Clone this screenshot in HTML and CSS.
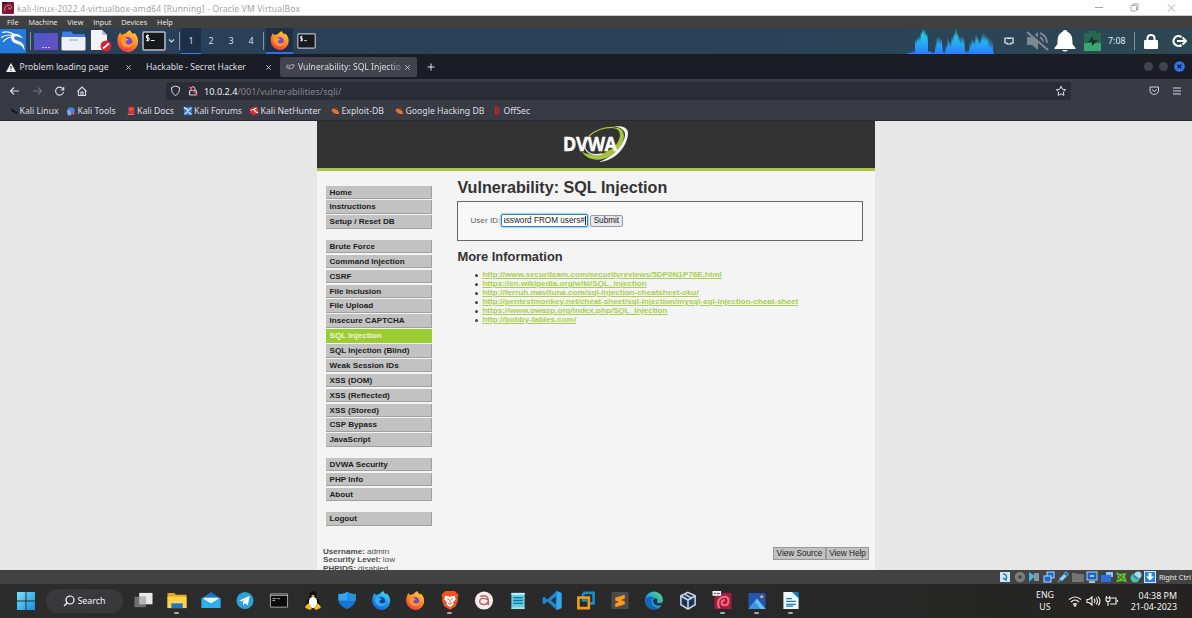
FILE: index.html
```
<!DOCTYPE html>
<html lang="en">
<head>
<meta charset="utf-8">
<title>kali-linux-2022.4-virtualbox-amd64 [Running] - Oracle VM VirtualBox</title>
<link rel="stylesheet" href="styles.css">
</head>
<body>
<svg width="0" height="0" class="defs">
  <defs>
    <linearGradient id="gGraph" x1="0" y1="0" x2="0" y2="1"><stop offset="0" stop-color="#25e6d2"/><stop offset=".5" stop-color="#25b4f0"/><stop offset="1" stop-color="#2a7cff"/></linearGradient>
    <linearGradient id="gFox" x1=".8" y1="0" x2=".3" y2="1"><stop offset="0" stop-color="#ffd43a"/><stop offset=".5" stop-color="#ff8a1e"/><stop offset="1" stop-color="#f2334c"/></linearGradient>
    <linearGradient id="gFoxB" x1=".8" y1="0" x2=".3" y2="1"><stop offset="0" stop-color="#4de0f5"/><stop offset=".5" stop-color="#1f9cf0"/><stop offset="1" stop-color="#1b5fd8"/></linearGradient>
    <linearGradient id="gDesk" x1="0" y1="0" x2="1" y2="1"><stop offset="0" stop-color="#4a58c8"/><stop offset="1" stop-color="#6a4fc0"/></linearGradient>
    <linearGradient id="gWin" x1="0" y1="0" x2="1" y2="1"><stop offset="0" stop-color="#7be0fa"/><stop offset="1" stop-color="#1290dd"/></linearGradient>
    <linearGradient id="gEdge" x1="0" y1="1" x2="1" y2="0"><stop offset="0" stop-color="#0c6ac4"/><stop offset=".5" stop-color="#22a8dc"/><stop offset="1" stop-color="#64dc60"/></linearGradient>
    <symbol id="fox" viewBox="0 0 24 24"><path fill="url(#gFox)" d="M1 13C.500 9 2 5.500 4 2.500l1.500 3c1-1 2.500-1.500 4-1.500C11 2.500 13 1 15 0c0 2 2 3 3.500 4.500L19.500 3C22.500 6 24 10 23.500 13.500 23 19.500 17.500 24 12.300 24S1.500 19.500 1 13z"/><circle cx="12" cy="13" r="5.300" fill="#7a45d8"/><path fill="#ff9a28" d="M5.500 8.500c2-1 4-.500 5.500.800l2 .700c-.500 1.500-2.500 1.300-3 2.500-.400 2 1.500 3.500 3.500 3.200 2-.300 3-1.700 5-1.200-1.500 4-6 5.500-9.500 4C5 17 4 12 5.500 8.500z"/></symbol>
    <symbol id="foxb" viewBox="0 0 24 24"><path fill="url(#gFoxB)" d="M1 13C.500 9 2 5.500 4 2.500l1.500 3c1-1 2.500-1.500 4-1.500C11 2.500 13 1 15 0c0 2 2 3 3.500 4.500L19.500 3C22.500 6 24 10 23.500 13.500 23 19.500 17.500 24 12.300 24S1.500 19.500 1 13z"/><circle cx="12" cy="13" r="5.300" fill="#123f96"/><path fill="#31aef5" d="M5.500 8.500c2-1 4-.500 5.500.800l2 .700c-.500 1.500-2.500 1.300-3 2.500-.400 2 1.500 3.500 3.500 3.200 2-.300 3-1.700 5-1.200-1.500 4-6 5.500-9.500 4C5 17 4 12 5.500 8.500z"/></symbol>
    <symbol id="term" viewBox="0 0 24 20"><rect x="1" y="1" width="22" height="18" rx="1" fill="#17191c" stroke="#b9bfc6" stroke-width="1.500"/><path d="M7 4.500H4.500V7H7v2.500H4.200M5.700 3.500v7M9 9.500h3.500" stroke="#fff" fill="none"/></symbol>
    <symbol id="x" viewBox="0 0 8 8"><path d="M1.500 1.500l5 5m0-5l-5 5" stroke="currentColor" fill="none"/></symbol>
    <symbol id="bug" viewBox="0 0 12 12"><path d="M2 4l3-1 5 3 1 3.500-4 0-4-2z" fill="#ef7228"/><path d="M2 6l3 3M6 4l3-1" stroke="#a84e20"/></symbol>
  </defs>
</svg>

<header class="titlebar">
  <svg class="vm-icon" viewBox="0 0 12 12"><rect width="12" height="12" rx="1" fill="#7d1732"/><path d="M3 9c-1-3 1-6 4-6s3 4 1 4-2-2-1-2" fill="none" stroke="#e4869a"/><path d="M0 0h5v2H0z" fill="#4b1020"/></svg>
  <span class="title-text">kali-linux-2022.4-virtualbox-amd64 [Running] - Oracle VM VirtualBox</span>
  <svg class="win-controls" viewBox="0 0 90 16" fill="none" stroke="#9c9c9c" stroke-width=".9"><path d="M5 7.500h8M78 4.500l7 7m0-7l-7 7"/><rect x="41" y="5.500" width="5.500" height="5.500" rx="1"/><path d="M43 5.500V4h5v5.500h-1.500"/></svg>
</header>

<nav class="vmmenu"><span>File</span><span>Machine</span><span>View</span><span>Input</span><span>Devices</span><span>Help</span></nav>

<div class="panel">
  <svg class="kali" viewBox="0 0 26 24"><rect width="26" height="24" fill="#2479dc"/><path d="M2 3.500c5-1.500 9-.500 12 2M1 8.500c4-2.500 8-3 12-2M3 13c2-3 5-5 10-5" stroke="#fff" stroke-width="1.200" fill="none"/><path d="M12 5c4-1 8 0 11 4l-4-1c-2-1-4-.800-5 0 0 2.500 2 3.500 5 4.200 3.500 1 5.500 4 5.500 9-2-4-4-5.500-7-6.200-4-1-6.500-3-6.500-6.500z" fill="#fff"/></svg>
  <i class="sep s1"></i>
  <svg class="desk" viewBox="0 0 24 17"><rect width="24" height="17" rx="1" fill="url(#gDesk)"/><path d="M8 14.500h2m1 0h2m1 0h2" stroke="#b8c8ff"/></svg>
  <svg class="folder" viewBox="0 0 25 20"><path d="M1 2q0-1.500 1.500-1.500h8L12 3h11q1 0 1 1v5H1z" fill="#3f7ae8"/><path d="M.5 6h24v12q0 1.500-1.500 1.500H2Q.5 19.500.5 18z" fill="#eef1f7"/><path d="M8 9h9" stroke="#b7bcc8" stroke-width="1.500"/></svg>
  <svg class="doc" viewBox="0 0 22 22"><path d="M1 0h11l5 5v15H1z" fill="#f3f3f5"/><path d="M12 0v5h5z" fill="#b9bec6"/><circle cx="16" cy="16" r="5.500" fill="#d42531"/><path d="M13 18.500l6-5" stroke="#fff" stroke-width="1.700"/></svg>
  <svg class="fox1"><use href="#fox"/></svg>
  <svg class="term1"><use href="#term"/></svg>
  <svg class="chev" viewBox="0 0 8 6"><path d="M2 1.500l2.500 2.500L7 1.500" fill="none" stroke="#d4d9df" stroke-width="1.200"/></svg>
  <i class="sep s2"></i>
  <span class="ws active">1</span><span class="ws">2</span><span class="ws">3</span><span class="ws">4</span>
  <i class="sep s3"></i>
  <span class="task-active"><svg><use href="#fox"/></svg></span>
  <svg class="term2"><use href="#term"/></svg>
  <svg class="graph" viewBox="0 0 87 26"><path fill="url(#gGraph)" d="M0 26V25.300H3L4 24 5 25.300 6 23 7 25 8 24V15L9 11 10 18V10L11 13 12 8 13 14 14 4 15 8V2L16 6 17 0V8L18 2 19 9 20 5 21 14V24L23 23 25 25 28 24V16L29 22 30 9 31 16 32 8 33 17 34 11 35 15 36 24 38 25 39 17 40 21 41 10 42 18 43 13 44 19 45 8 46 14 47 5 48 9 49 0 50 10 51 4 52 14 53 8 54 17 55 8 56 15 57 10 58 23 60 25 61 22 62 25 63 14 64 20 65 10 66 17 67 12 68 17 69 6 70 13 71 9 72 17 73 11 74 16 75 6 76 13 77 5 78 14 79 7 80 14 81 9 82 20 83 10 84 22 85 12 86 23 87 26z"/></svg>
  <svg class="net" viewBox="0 0 10 8"><path d="M1 1h8v5H7v1H3V6H1zM3 1.500h4" fill="none" stroke="#eee" stroke-width="1.200"/></svg>
  <svg class="mute" viewBox="0 0 24 20"><path d="M1 6h5l6-5v18l-6-5H1z" fill="#7d8992"/><path d="M14 2q7 3 7 10M14 6q3 2 3 6" stroke="#7d8992" stroke-width="2" fill="none"/><path d="M3 0l21 18" stroke="#2b4355" stroke-width="2"/><path d="M1 1l21 18" stroke="#7d8992" stroke-width="2.200"/></svg>
  <svg class="bell" viewBox="0 0 22 22"><path d="M11 0q2 0 2.500 2C18 4 18.500 8 18.500 14l3 4v1H.5v-1l3-4C3.500 8 4 4 8.500 2Q9 0 11 0z" fill="#fff"/><path d="M8 20h6q-3 3-6 0z" fill="#fff"/></svg>
  <svg class="batt" viewBox="0 0 17 20"><path d="M5 0h7v2h5v18H0V2h5z" fill="#286650"/><path d="M0 12h17v8H0z" fill="#3aa871"/><path d="M9 5l-5 6h4v4l6-6H9z" fill="#17372e"/></svg>
  <span class="clock">7:08</span>
  <i class="sep s4"></i>
  <svg class="lock" viewBox="0 0 14 15"><path d="M3.500 7V4a3.500 3 0 0 1 7 0v3" fill="none" stroke="#fff" stroke-width="2"/><rect x="0" y="6" width="14" height="9" rx="1" fill="#fff"/></svg>
  <svg class="logout" viewBox="0 0 16 14"><path d="M10.500 3A5 5 0 1 0 10.500 11" fill="none" stroke="#fff" stroke-width="2.200"/><path d="M6 7h8M11.500 3.500L15 7l-3.500 3.500" fill="none" stroke="#fff" stroke-width="2"/></svg>
</div>

<div class="tabs">
  <div class="tab t1"><svg class="warn" viewBox="0 0 10 9"><path d="M5 0l5 9H0z" fill="#f3f3f3"/><path d="M5 3v3m0 1v1" stroke="#222"/></svg><span>Problem loading page</span><svg class="close"><use href="#x"/></svg></div>
  <div class="tab t2"><span>Hackable - Secret Hacker</span><svg class="close"><use href="#x"/></svg></div>
  <div class="tab t3"><svg class="fav" viewBox="0 0 10 8"><path d="M3 2H1v3h3M3.500 4.500q0-3 3-3h2.500q0 4-3.500 4.500H3" fill="none" stroke="#a5a9ae" stroke-width="1.100"/></svg><span>Vulnerability: SQL Injectio</span><svg class="close"><use href="#x"/></svg></div>
  <svg class="plus" viewBox="0 0 8 8"><path d="M4 .5v7M.5 4h7" stroke="#e3e3e6"/></svg>
  <div class="dots"><i></i><i></i><svg viewBox="0 0 12 12"><circle cx="6" cy="6" r="5.800" fill="#2f74f0"/><path d="M4 4l4 4m0-4l-4 4" stroke="#10152a" stroke-width="1.500"/></svg></div>
</div>

<div class="navbar">
  <svg class="navicons" viewBox="0 0 100 22" fill="none" stroke="#dedee2" stroke-width="1.100"><path d="M19 11h-8.500m3.500-3.500L10.500 11l3.500 3.500"/><path d="M33 11h8.500M38 7.500l3.500 3.500L38 14.500" stroke="#70727b"/><path d="M63 9a4 4 0 1 0 .5 3M63.700 7v3h-3"/><path d="M77.500 11.500L82 7l4.500 4.500M78.500 11v4.500h7V11M81 15v-3h2v3"/></svg>
  <div class="url">
    <svg class="urlicons" viewBox="0 0 34 18"><path d="M5.500 5.500L9.500 4l4 1.500c0 4-1 6.500-4 8-3-1.500-4-4-4-8z" fill="none" stroke="#dedee2"/><rect x="23.500" y="8.500" width="7" height="4.500" rx="1" fill="none" stroke="#d0d0d5" stroke-width="1.200"/><path d="M25 8V6q2-3 4 0v2" fill="none" stroke="#d0d0d5"/><path d="M23 4.500l8.500 9" stroke="#e4445d" stroke-width="1.200"/></svg>
    <span class="addr"><b>10.0.2.4</b>/001/vulnerabilities/sqli/</span>
    <svg class="star" viewBox="0 0 12 12"><path d="M6 1.200l1.400 3.100 3.300.4-2.400 2.300.6 3.400L6 8.800l-2.900 1.600.6-3.400-2.400-2.300 3.300-.4z" fill="none" stroke="#dedee2"/></svg>
  </div>
  <svg class="navright" viewBox="0 0 40 18"><path d="M5 5h8.500v3q0 4-4.250 4.500Q5 12 5 8zM7 7.500l2.300 2 2.300-2" fill="none" stroke="#d5d5da"/><path d="M28 6h8M28 9h8M28 12h8" stroke="#d5d5da"/></svg>
</div>

<div class="bookmarks">
  <div class="bm b1"><svg viewBox="0 0 12 12"><path d="M1 2l5 2 2 2 3 1v3L8 8 5 7 4 4z" fill="#15161c"/></svg><span>Kali Linux</span></div>
  <div class="bm b2"><svg viewBox="0 0 12 12"><circle cx="6" cy="6" r="4.500" fill="#3e82ea"/><path d="M1 5h5v6H2z" fill="#7ab0f2"/><path d="M6 6l4 4" stroke="#e34a61" stroke-width="2"/></svg><span>Kali Tools</span></div>
  <div class="bm b3"><svg viewBox="0 0 12 12"><path d="M3 1h7v8H3z" fill="#e23232"/><path d="M2 10h8M4 4h4" stroke="#f26a65" stroke-width="1.500"/></svg><span>Kali Docs</span></div>
  <div class="bm b4"><svg viewBox="0 0 12 12"><path d="M1 1h10v10H1z" fill="#2d77dc"/><path d="M1 2l4 2 2 4 3 2M10 2L2 10" stroke="#e7efff" stroke-width="1.500" fill="none"/></svg><span>Kali Forums</span></div>
  <div class="bm b5"><svg viewBox="0 0 12 12"><path d="M1 4l5-3 5 2v6l-5 2-5-3z" fill="#dc2f35"/><path d="M2 5l4-1 2 3 3 1M6 4l3-2" stroke="#fff" stroke-width="1.300" fill="none"/></svg><span>Kali NetHunter</span></div>
  <div class="bm b6"><svg><use href="#bug"/></svg><span>Exploit-DB</span></div>
  <div class="bm b7"><svg><use href="#bug"/></svg><span>Google Hacking DB</span></div>
  <div class="bm b8"><svg viewBox="0 0 12 12"><path d="M4 8V2q2-2 4 0v6M6 3v8M4 10V7m4 3V7" stroke="#d0202e" fill="none" stroke-width="1.400"/></svg><span>OffSec</span></div>
</div>

<main class="viewport">
  <div class="dvwa">
    <div class="banner">
      <svg viewBox="0 0 70 38"><path d="M28 11C35 5 43 2 53 2.500" fill="none" stroke="#a4c63b" stroke-width="1.200"/><path d="M50 3C59 3 61 9 57 17 51 26 37 34 21 27 25 34 38 38 49 31 61 24 66 12 61 5 58 2 53 2 50 3z" fill="#a4c63b"/><path d="M53 1.500C62 .5 67.500 3 67 9 66 22 54 36 38 37 52 32 63 20 64 10 64.300 5 60 2.500 53 1.500z" fill="#f4f4f4"/><path d="M27 13C19 23 27 32 41 29" fill="none" stroke="#e8e8e8" stroke-width="1.300"/><text x="2" y="25.500" textLength="54" lengthAdjust="spacingAndGlyphs" class="logo-text">DVWA</text></svg>
    </div>
    <div class="columns">
      <aside>
        <ul><li>Home</li><li>Instructions</li><li>Setup / Reset DB</li></ul>
        <ul><li>Brute Force</li><li>Command Injection</li><li>CSRF</li><li>File Inclusion</li><li>File Upload</li><li>Insecure CAPTCHA</li><li class="selected">SQL Injection</li><li>SQL Injection (Blind)</li><li>Weak Session IDs</li><li>XSS (DOM)</li><li>XSS (Reflected)</li><li>XSS (Stored)</li><li>CSP Bypass</li><li>JavaScript</li></ul>
        <ul><li>DVWA Security</li><li>PHP Info</li><li>About</li></ul>
        <ul><li>Logout</li></ul>
        <div class="sysinfo"><div><b>Username:</b> admin</div><div><b>Security Level:</b> low</div><div><b>PHPIDS:</b> disabled</div></div>
      </aside>
      <section class="body">
        <h1>Vulnerability: SQL Injection</h1>
        <div class="form"><label>User ID:</label><span class="field"><span class="clip"><span>assword FROM users#</span></span></span><button>Submit</button></div>
        <h2>More Information</h2>
        <ul class="links">
          <li><a>http://www.securiteam.com/securityreviews/5DP0N1P76E.html</a></li>
          <li><a>https://en.wikipedia.org/wiki/SQL_injection</a></li>
          <li><a>http://ferruh.mavituna.com/sql-injection-cheatsheet-oku/</a></li>
          <li><a>http://pentestmonkey.net/cheat-sheet/sql-injection/mysql-sql-injection-cheat-sheet</a></li>
          <li><a>https://www.owasp.org/index.php/SQL_Injection</a></li>
          <li><a>http://bobby-tables.com/</a></li>
        </ul>
        <div class="view"><button>View Source</button><button>View Help</button></div>
      </section>
    </div>
  </div>
</main>

<div class="vmstatus">
  <svg viewBox="0 0 12 12"><rect x="1" y="1" width="10" height="10" fill="#cfe6f5"/><path d="M4 3q5 0 3 6l-3-2" fill="none" stroke="#1878bb" stroke-width="1.500"/></svg>
  <svg viewBox="0 0 12 12"><circle cx="6" cy="6" r="3.500" fill="none" stroke="#7c7c7c" stroke-width="3.500"/></svg>
  <svg viewBox="0 0 12 12"><path d="M1 1l6 4-6 6z" fill="#4fb2e4"/><path d="M6 2h5v8H6z" fill="#7d98ab"/></svg>
  <svg viewBox="0 0 12 12"><rect x="4" y="1" width="7" height="6" fill="#1d66cc" stroke="#b2d6ff"/><rect x="1" y="5" width="7" height="6" fill="#1d66cc" stroke="#b2d6ff"/></svg>
  <svg viewBox="0 0 12 12"><path d="M2 8l5-5 3 2-5 5z" fill="#80d5fa"/><path d="M7 3l2-2 2 2-1 2M1 11l2-2" fill="none" stroke="#36a0d8" stroke-width="1.500"/></svg>
  <svg viewBox="0 0 12 12"><path d="M0 2h4l1 1h7v8H0z" fill="#747474"/></svg>
  <svg viewBox="0 0 12 12"><rect x="1" y="1" width="10" height="8" fill="#1b64c0" stroke="#a4d0f9"/><path d="M4 5h4M3 11h6" stroke="#cde8ff" stroke-width="1.500"/></svg>
  <svg viewBox="0 0 12 12"><path d="M5 1h7v5H5z" fill="#93bff1"/><path d="M0 4h10v7H0z" fill="#2c6fdb"/></svg>
  <svg viewBox="0 0 12 12"><path d="M1 1l4 2 6-1-1 4 2 5-5-1-6 1 2-4z" fill="#65bd30"/><path d="M3 4l6 5M3 9l5-5" stroke="#226f17"/></svg>
  <svg viewBox="0 0 12 12"><circle cx="5" cy="7" r="4.500" fill="#56c2a4"/><circle cx="8" cy="4" r="3.500" fill="#a0ddf5"/><path d="M3 4l5 4" stroke="#2f83b5" stroke-width="2"/></svg>
  <svg viewBox="0 0 12 12"><rect width="12" height="12" fill="#cfeaff"/><rect x="1" y="1" width="10" height="10" fill="#2586d9"/><path d="M4.500 2h3v3.500H10L6 9.500 2 5.500h2.500z" fill="#fff"/></svg>
  <span>Right Ctrl</span>
</div>

<footer class="taskbar">
  <svg class="start" viewBox="0 0 20 20" fill="url(#gWin)"><path d="M1 1h8.500v8.500H1zM10.500 1H19v8.500h-8.500zM1 10.500h8.500V19H1zM10.500 10.500H19V19h-8.500z"/></svg>
  <div class="search"><svg viewBox="0 0 12 12"><circle cx="7" cy="5" r="4" fill="none" stroke="#fff" stroke-width="1.200"/><path d="M4 8l-3 3" stroke="#fff" stroke-width="1.300"/></svg><span>Search</span></div>
  <div class="apps">
    <span><svg viewBox="0 0 20 20"><path d="M6 2h14v12H6z" fill="#e8e8e8"/><path d="M1 6h12v11H1z" fill="#777" opacity=".9"/><path d="M6 6h7v8H6z" fill="#b7b7b7"/></svg></span>
    <span class="run"><svg viewBox="0 0 20 20"><path d="M0 2h7l2 2h11v14H0z" fill="#e8a918"/><path d="M0 6h20v12H0z" fill="#fdd34e"/><path d="M4 13h12v5H4z" fill="#1d77c8"/></svg></span>
    <span><svg viewBox="0 0 20 20"><path d="M0 8l10-7 10 7v10H0z" fill="#1676c8"/><path d="M2 7h16v6H2z" fill="#e7f6ff"/><path d="M0 7l10 6 10-6v11H0z" fill="#30afea"/></svg></span>
    <span><svg viewBox="0 0 20 20"><circle cx="10" cy="10" r="9" fill="#2da2da"/><path d="M4 10l11-5-2 10-3-2-2 2v-4l5-4-6 4z" fill="#fff"/></svg></span>
    <span><svg viewBox="0 0 20 20"><path d="M1 3h18v14H1z" fill="#0b0b0b" stroke="#aaa"/><path d="M1 4.500h18" stroke="#ccc"/><path d="M3 8h4m1 0h3M3 10h3" stroke="#ddd" stroke-width=".8"/></svg></span>
    <span><svg viewBox="0 0 20 20"><path d="M10 0c4 0 4 5 4 7 3 3 4 7 3 9H3c-1-3 0-6 3-9 0-3 0-7 4-7z" fill="#101010"/><ellipse cx="10" cy="12" rx="4.300" ry="6" fill="#fff"/><path d="M8 5l2-1 2 1-2 2zM2 16l3-3 4 5-2 2-5-2zM18 16l-3-3-4 5 2 2 5-2z" fill="#f5b928"/></svg></span>
    <span><svg viewBox="0 0 20 20"><path d="M10 1q5 3 9 2v7q-1 6-9 9-8-3-9-9V3q5 1 9-2z" fill="#1677cf"/><path d="M10 1q5 3 9 2v7H1V3q5 1 9-2z" fill="#36a3ee"/><path d="M10 1q5 3 9 2v7h-9z" fill="#2590e2"/></svg></span>
    <span><svg><use href="#foxb"/></svg></span>
    <span><svg><use href="#fox"/></svg></span>
    <span class="run"><svg viewBox="0 0 20 20"><path d="M5 0h10l4 4-1 3 .5 3L16 16l-6 4-6-4L1.500 10 2 7 1 4z" fill="#f4512b"/><path d="M5 5l5 1 5-1 1 4-3 3 1 2-4 3-4-3 1-2-3-3z" fill="#fff"/><path d="M7 8l2 1m4-1l-2 1M10 9v4m-2 0l2 1 2-1" stroke="#f4512b" fill="none"/></svg></span>
    <span><svg viewBox="0 0 20 20"><circle cx="10" cy="10" r="9.500" fill="#f5eeec"/><path d="M6 6q4-2 7 0 2 1 1.500 9M14 9q-8-3-8.500 1.500T12 14q2-1 2-3" fill="none" stroke="#b76557" stroke-width="1.500"/></svg></span>
    <span><svg viewBox="0 0 20 20"><path d="M3 2h14v17H3z" fill="#60cee3"/><path d="M3 2h14v2H3z" fill="#c6f1f5"/><path d="M5 7h10M5 10h10M5 13h10" stroke="#176f9b" stroke-width="1.500"/><path d="M3 18h14" stroke="#eee"/></svg></span>
    <span><svg viewBox="0 0 20 20"><path d="M15 0l5 2v16l-5 2L5 11l-3 3-2-1V7l2-1 3 3z" fill="#1c86d1"/><path d="M14 6v8l-5-4z" fill="#292929"/><path d="M15 0l5 2v16l-5 2z" fill="#35a9ef"/></svg></span>
    <span><svg viewBox="0 0 20 20" fill="none" stroke-width="2.800"><path d="M7 2h11v11h-4M7 2v8h4" stroke="#168dc5"/><path d="M2 7h11v11H2z" stroke="#f29a20"/></svg></span>
    <span><svg viewBox="0 0 20 20"><rect x="1" y="1" width="18" height="18" rx="1" fill="#4b4b4b"/><path d="M15 4v4l-4 1.500 4 1.500v3L5 17v-4l4-1.300-4-1.700V7z" fill="#ff9a16"/></svg></span>
    <span><svg viewBox="0 0 20 20"><circle cx="10" cy="10" r="9.500" fill="url(#gEdge)"/><path d="M9 10q1-3 3.500-2 2 1 .5 4 3 2 6.500-1l-1 4q-9 2-9.500-5z" fill="#26333c"/><path d="M1 8q5-4 9-1-4 2-2 7 2 4 8 4-10 4-14-3z" fill="#1267ba"/></svg></span>
    <span><svg viewBox="0 0 20 20" stroke-width="1.600"><path d="M10 1.500l7.500 3.500v9.500L10 19l-7.500-4.500V5z" fill="#1b3456" stroke="#ccd9ec"/><path d="M3 5.500l7 4 7-4M10 9.500V19M6.500 3.500L13 7" fill="none" stroke="#ccd9ec"/></svg></span>
    <span class="run"><svg viewBox="0 0 20 20"><path d="M2 2h18v17H2z" fill="#9d1f3b"/><path d="M7 18c-3-8 1-12 6-12s5 9 0 9-4-6 0-5" fill="none" stroke="#fa6881" stroke-width="2.200"/><path d="M0 0h9v5H0z" fill="#f3f3f3"/><path d="M1.500 2.500h2m1 0h3" stroke="#333"/></svg></span>
    <span class="run"><svg viewBox="0 0 20 20"><rect x="1" y="2" width="18" height="17" rx="1" fill="#2356b2"/><path d="M1 19l9-11 9 11z" fill="#62c4f6"/><path d="M1 19l7-8 6 8z" fill="#3d95e4"/><circle cx="15" cy="6" r="1.700" fill="#f49b52"/></svg></span>
    <span class="run"><svg viewBox="0 0 20 20"><path d="M2 1h10l6 5v13H2z" fill="#edf8ff"/><path d="M11 1h7v7z" fill="#137ac1"/><path d="M5 8h6M5 11h10M5 14h10M5 16h7" stroke="#187bb8" stroke-width="1.300"/></svg></span>
  </div>
  <div class="lang">ENG<br>US</div>
  <svg class="tray" viewBox="0 0 54 16" fill="none" stroke="#f1f1f1" stroke-width="1.100"><path d="M2 6.500q6-5 12 0M4 9q4-4 8 0M6 11.500q2-2 4 0"/><circle cx="8" cy="12.500" r=".7"/><path d="M20 6.500h2l3-2.500v8l-3-2.500h-2zM27 6q2 2 0 4M29 4.500q3 3.500 0 7M31 3.500q4 4.500 0 9"/><path d="M42 5h7v6h-6M50.500 7v2M39 5h4v2.500q-2 2-4 0zM39.500 3v2M42.500 3v2M41 9v4"/></svg>
  <div class="datetime">04:38 PM<br>21-04-2023</div>
</footer>
</body>
</html>
```
FILE: styles.css
```
* { box-sizing: border-box; }
html, body { margin: 0; height: 618px; overflow: hidden; }
body { width: 1192px; display: flex; flex-direction: column; font-family: "Noto Sans", sans-serif; background: #e7e7e7; white-space: nowrap; }
svg { display: block; flex: none; }
body > svg.defs { height: 0; }
ul { list-style: none; margin: 0; padding: 0; }

.titlebar { height: 16px; flex: none; display: flex; align-items: center; background: #fff; border-bottom: 1px solid #c9c9c9; padding: 1px 0 0 2px; }
.vm-icon { width: 12px; height: 12px; }
.title-text { margin-left: 3px; font-size: 8.500px; letter-spacing: .18px; color: #a3a3a3; }
.win-controls { width: 90px; height: 16px; margin-left: auto; margin-right: 12px; }

.vmmenu { height: 12px; flex: none; background: #404040; display: flex; align-items: center; color: #eee; font: 7.300px "Open Sans", sans-serif; padding-left: 7px; gap: 9.900px; }

.panel { height: 26px; flex: none; display: flex; align-items: center; background: linear-gradient(90deg, #2a3f58, #2a4158 60%, #2d4754); }
.sep { width: 1px; height: 18px; background: #8793a2; flex: none; }
.kali { width: 26px; height: 24px; }
.s1 { margin-left: 4px; }
.desk { width: 24px; height: 17px; margin-left: 3px; }
.folder { width: 25px; height: 20px; margin-left: 3px; }
.doc { width: 22px; height: 22px; margin-left: 4px; }
.fox1 { width: 23px; height: 22px; margin-left: 4px; }
.term1 { width: 24px; height: 20px; margin-left: 3px; }
.chev { width: 8px; height: 6px; margin-left: 1px; }
.s2 { margin-left: 4px; margin-right: 1px; }
.ws { width: 20px; height: 26px; line-height: 26px; text-align: center; font-size: 9px; color: #d8dee5; }
.ws.active { background: #1e3048; border-bottom: 1px solid #3e82e6; }
.s3 { margin-left: 2px; }
.task-active { width: 27px; height: 26px; margin-left: 2px; background: #1f2f47; border-bottom: 2px solid #3473d6; display: flex; align-items: center; justify-content: center; }
.task-active svg { width: 19px; height: 19px; }
.term2 { width: 19px; height: 16px; margin-left: 4px; }
.graph { width: 87px; height: 26px; margin-left: auto; }
.net { width: 10px; height: 8px; margin-left: 10px; }
.mute { width: 24px; height: 20px; margin-left: 12px; }
.bell { width: 22px; height: 22px; margin-left: 4px; }
.batt { width: 17px; height: 20px; margin-left: 8px; }
.clock { width: 20px; margin-left: 7px; font-size: 8.800px; color: #e3e7ea; }
.s4 { margin-left: 6px; }
.lock { width: 14px; height: 15px; margin-left: 9px; }
.logout { width: 16px; height: 14px; margin: 0 5px 0 13px; }

.tabs { height: 25px; flex: none; background: #1b1d26; display: flex; align-items: center; color: #dedee2; font-size: 8.600px; }
.tab { display: flex; align-items: center; height: 20px; padding-top: 1px; }
.close { width: 7px; height: 7px; margin-left: auto; color: #cfcfd4; }
.t1 { width: 132px; padding-left: 6px; }
.warn { width: 10px; height: 9px; margin-right: 3.500px; }
.t2 { width: 126px; margin-left: 14px; }
.t3 { width: 137px; margin-left: 8px; padding: 1px 6px 0 6px; background: #42434c; border-radius: 2px; }
.t3 .fav { width: 9px; height: 8px; margin-right: 3px; }
.t3 span { -webkit-mask-image: linear-gradient(90deg, #000 88%, rgba(0,0,0,.3)); mask-image: linear-gradient(90deg, #000 88%, rgba(0,0,0,.3)); }
.plus { width: 8px; height: 8px; margin-left: 10px; }
.dots { display: flex; align-items: center; gap: 6px; margin-left: auto; padding-right: 7px; }
.dots i { width: 9px; height: 9px; border-radius: 50%; background: #42434f; }
.dots svg { width: 11px; height: 11px; }

.navbar { height: 22px; flex: none; background: #383a44; display: flex; align-items: center; }
.navicons { width: 100px; height: 22px; margin-top: 2px; }
.url { width: 905px; height: 18px; margin-left: 66px; margin-top: 2px; background: #2a2c36; border-radius: 2px; display: flex; align-items: center; }
.urlicons { width: 34px; height: 18px; }
.addr { margin-left: 4px; font-size: 9.150px; color: #85868f; }
.addr b { font-weight: 400; color: #f4f4f6; }
.star { width: 12px; height: 12px; margin-left: auto; margin-right: 4px; }
.navright { width: 40px; height: 18px; margin-left: 74px; margin-top: 2px; }

.bookmarks { height: 20px; flex: none; background: #383a44; border-bottom: 1px solid #292b34; display: flex; align-items: center; padding: 1px 0 0 8px; color: #dcdce0; font-size: 8.700px; }
.bm { display: flex; align-items: center; flex: none; }
.bm svg { width: 10px; height: 10px; margin-right: 1.500px; }
.b1 { width: 58px; }
.b2 { width: 59.500px; }
.b3 { width: 57px; }
.b4 { width: 66.500px; }
.b5 { width: 81px; }
.b6 { width: 64px; }
.b7 { width: 98px; }

.viewport { height: 449px; flex: none; overflow: hidden; display: flex; padding-left: 317px; background: #e7e7e7; font-family: "Liberation Sans", Arial, sans-serif; color: #333; }
.dvwa { width: 558px; height: 449px; background: #f4f4f4; }
.banner { height: 50px; background: #333; border-bottom: 3px solid #a6c742; padding: 4px 0 0 244px; }
.banner svg { width: 70px; height: 38px; }
.logo-text { font: 700 20px "Noto Sans", sans-serif; fill: #fff; stroke: #fff; stroke-width: .4px; }
.columns { display: flex; height: 399px; }
aside { width: 115px; padding: 14.600px 0 0 9px; flex: none; }
aside ul { display: flex; flex-direction: column; gap: 1.380px; margin-bottom: 11.100px; }
aside li { height: 13.500px; padding-left: 3.500px; font-size: 8.100px; line-height: 13.500px; font-weight: 700; color: #1c1c1c; background: #c2c2c2; border-right: 1px solid #a0a0a0; border-bottom: 1px solid #a0a0a0; }
aside li.selected { background: #9acd32; color: #eef6dc; border-color: #9acd32; }
.sysinfo { margin: 22px 0 0 -3px; font-size: 8.100px; line-height: 8.700px; color: #4c4c4c; }
.body { padding-left: 25.400px; width: 443px; display: flex; flex-direction: column; }
h1 { margin: 7px 0 0; height: 23px; font-size: 16.150px; line-height: 19px; }
.form { width: 406px; height: 40px; border: 1px solid #666; background: #f8f8f8; display: flex; align-items: center; padding: 0 0 1px 12px; font-size: 8px; color: #555; }
.form label { width: 31px; letter-spacing: .1px; }
.field { width: 86.500px; height: 13px; border: 1.500px solid #2f83b8; border-radius: 2px; box-shadow: 0 0 1px 1px #a5d3f1; background: #fff; color: #222; display: flex; align-items: center; padding: 0 1px 0 2px; }
.clip { flex: 1; overflow: hidden; display: flex; justify-content: flex-end; }
.clip span { border-right: 1px solid #222; font-size: 8.200px; line-height: 9px; }
button { font: 8.200px "Liberation Sans", Arial, sans-serif; color: #222; padding: 0; }
.form button { width: 33px; height: 12px; margin-left: 2px; border: 1px solid #999aa3; border-radius: 2px; background: #e7e7eb; }
h2 { margin: 8px 0 0; height: 22px; font-size: 12.900px; line-height: 15px; }
.links { padding-left: 25px; font-size: 8.080px; line-height: 8.970px; font-weight: 700; }
.links li { position: relative; }
.links li::before { content: ""; position: absolute; left: -7px; top: 3px; width: 3px; height: 3px; border-radius: 50%; background: #444; }
.links a { color: #a9d04d; text-decoration: underline; }
.view { margin-top: auto; margin-bottom: 10px; display: flex; align-self: flex-end; margin-right: 6px; }
.view button { height: 13px; width: 53px; background: #c2c2c2; border: 1px solid #999; }
.view button + button { width: 43px; }

.vmstatus { height: 14px; flex: none; background: #434343; display: flex; align-items: center; justify-content: flex-end; gap: 2.500px; color: #ededed; font-size: 7.300px; }
.vmstatus svg { width: 12px; height: 12px; }
.vmstatus span { margin: 0 1px 0 0; }
.taskbar { height: 34px; flex: none; display: flex; align-items: center; background: linear-gradient(90deg, #2c2c2d, #292929 60%, #242322); color: #f4f4f4; }
.start { width: 20px; height: 20px; margin-left: 15.500px; }
.search { width: 77px; height: 24px; border-radius: 12px; margin-left: 10px; background: #39393b; display: flex; align-items: center; padding-left: 17px; font-size: 8.800px; }
.search svg { width: 12px; height: 12px; margin-right: 3px; }
.apps { display: flex; margin-left: 3px; }
.apps span { width: 34.120px; height: 34px; display: flex; flex-direction: column; align-items: center; padding-top: 7px; }
.apps svg { width: 20px; height: 19px; }
.apps .run::after { content: ""; width: 5px; height: 2px; border-radius: 1px; background: #aaa; margin-top: 2px; }
.lang { width: 24px; margin-left: auto; padding-top: 1px; font-size: 8.800px; line-height: 11.500px; text-align: center; }
.tray { width: 54px; height: 16px; margin-left: 10px; }
.datetime { width: 56px; margin-right: 15px; font-size: 8.900px; line-height: 11.500px; text-align: right; }
```
